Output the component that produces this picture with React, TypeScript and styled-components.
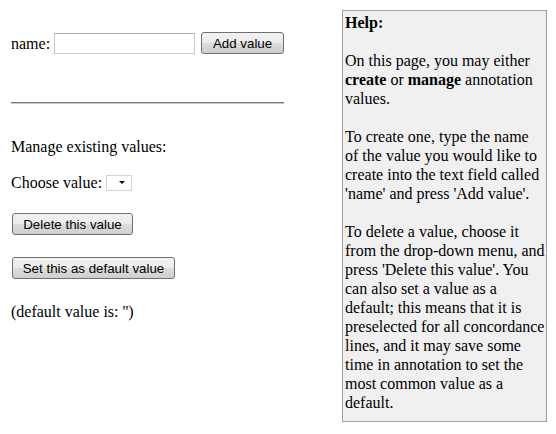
import React from "react";
import styled, { createGlobalStyle } from "styled-components";

const Global = createGlobalStyle`
  html, body { margin: 0; padding: 0; background: #ffffff; }
  body {
    font-family: "Liberation Serif", "Times New Roman", serif;
    font-size: 16px;
    line-height: 19px;
    color: #000000;
  }
`;

const Page = styled.div`
  display: flex;
  align-items: flex-start;
  padding: 10px 0 0 11px;
`;

const Main = styled.div`
  width: 273px;
  display: flex;
  flex-direction: column;
  padding-top: 22px;
`;

const FormRow = styled.div`
  display: flex;
  align-items: center;
  height: 22px;
`;

const Label = styled.span`
  margin-right: 4px;
`;

const TextInput = styled.input`
  box-sizing: border-box;
  width: 141px;
  height: 21px;
  margin: 0 6px 0 0;
  border: 1px solid #c8c8c8;
  border-top-color: #abadb3;
  background: #ffffff;
  padding: 0 2px;
  font: 13px "Liberation Sans", Arial, sans-serif;
`;

const Button = styled.button<{ $w: number }>`
  box-sizing: border-box;
  width: ${(p) => p.$w}px;
  height: 22px;
  margin: 0;
  padding: 0;
  border: 1px solid #707070;
  border-radius: 3px;
  background: linear-gradient(#f2f2f2 0%, #ebebeb 50%, #dddddd 51%, #cfcfcf 100%);
  font: 13.33px "Liberation Sans", Arial, sans-serif;
  color: #000000;
  text-align: center;
  white-space: nowrap;
`;

const Rule = styled.div`
  height: 0;
  margin-top: 48px;
  border-top: 1px solid #7a7a7a;
  border-bottom: 1px solid #c8c8c8;
`;

const Line = styled.div<{ $top: number }>`
  margin-top: ${(p) => p.$top}px;
  display: flex;
  align-items: center;
  height: 19px;
`;

const Select = styled.div`
  box-sizing: border-box;
  width: 26px;
  height: 16px;
  margin-left: 4px;
  border: 1px solid #d4d4d4;
  background: #ffffff;
  display: flex;
  align-items: center;
  justify-content: flex-end;
  padding-right: 6px;
`;

const Arrow = styled.span`
  width: 0;
  height: 0;
  border-left: 3px solid transparent;
  border-right: 3px solid transparent;
  border-top: 3px solid #000000;
`;

const ButtonRow = styled.div<{ $top: number }>`
  margin-top: ${(p) => p.$top}px;
  padding-left: 1px;
  display: flex;
`;

const Help = styled.div`
  box-sizing: border-box;
  width: 205px;
  height: 412px;
  margin-left: 58px;
  border: 1px solid #a0a0a0;
  background: #f0f0f0;
  padding: 2px 0 0 2px;
  white-space: nowrap;
`;

const HelpTitle = styled.div`
  font-weight: bold;
`;

const Para = styled.p`
  margin: 19px 0 0 0;
`;

export default function App() {
  return (
    <>
      <Global />
      <Page>
        <Main>
          <FormRow>
            <Label>name:</Label>
            <TextInput type="text" />
            <Button $w={84}>Add value</Button>
          </FormRow>
          <Rule />
          <Line $top={33}>Manage existing values:</Line>
          <Line $top={17}>
            Choose value:
            <Select>
              <Arrow />
            </Select>
          </Line>
          <ButtonRow $top={21}>
            <Button $w={121}>Delete this value</Button>
          </ButtonRow>
          <ButtonRow $top={22}>
            <Button $w={163}>Set this as default value</Button>
          </ButtonRow>
          <Line $top={23}>(default value is: '')</Line>
        </Main>
        <Help>
          <HelpTitle>Help:</HelpTitle>
          <Para>
            On this page, you may either
            <br />
            <b>create</b> or <b>manage</b> annotation
            <br />
            values.
          </Para>
          <Para>
            To create one, type the name
            <br />
            of the value you would like to
            <br />
            create into the text field called
            <br />
            'name' and press 'Add value'.
          </Para>
          <Para>
            To delete a value, choose it
            <br />
            from the drop-down menu, and
            <br />
            press 'Delete this value'. You
            <br />
            can also set a value as a
            <br />
            default; this means that it is
            <br />
            preselected for all concordance
            <br />
            lines, and it may save some
            <br />
            time in annotation to set the
            <br />
            most common value as a
            <br />
            default.
          </Para>
        </Help>
      </Page>
    </>
  );
}
